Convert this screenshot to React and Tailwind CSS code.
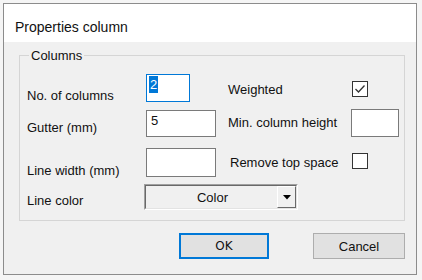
// Windows-style checkbox
function CheckBox({ checked }) {
  return (
    <div className="w-[16px] h-[16px] border border-[#333333] bg-white flex items-center justify-center">
      {checked && (
        <svg width="14" height="14" viewBox="0 0 14 14">
          <polyline points="2.5,7 5.5,10 11.5,3.5" fill="none" stroke="#333333" strokeWidth="1.3" />
        </svg>
      )}
    </div>
  )
}

// Plain text box
function TextBox({ className = '', focused = false, children }) {
  return (
    <div
      className={`bg-white border ${focused ? 'border-[#0078d7]' : 'border-[#7a7a7a]'} pl-[2px] pt-[1px] text-[13px] leading-[17px] ${className}`}
    >
      {children}
    </div>
  )
}

export default function App() {
  return (
    <div className="w-[422px] h-[280px] bg-[#f5f5f5] pl-[3px] pt-[3px] overflow-hidden text-[#111111] font-['Liberation_Sans',Arial,sans-serif]">
      {/* ── Dialog window ───────────────────────────── */}
      <div className="w-[414px] h-[272px] border border-[#8c8c8c] bg-[#f0f0f0] flex flex-col">

        {/* Title bar */}
        <div className="h-[38px] bg-white pl-[11px] pt-[11px] shrink-0">
          <span className="text-[14px] leading-[16px]">Properties column</span>
        </div>

        {/* Body */}
        <div className="flex-1 pl-[15px] pr-[11px] pt-[6px] flex flex-col">
          <fieldset className="h-[173px] border border-[#d5d5d5]">
            <legend className="ml-[9px] px-[2px] text-[13px] leading-[15px]">Columns</legend>

            <div className="pl-[7px] pt-[11px] text-[13px] leading-[15px]">
              {/* Row 1 */}
              <div className="grid grid-cols-[119px_82px_123px_1fr] items-start h-[36px]">
                <span className="mt-[14px]">No. of columns</span>
                <TextBox focused className="w-[44px] h-[28px]">
                  <span className="bg-[#0078d7] text-white inline-block px-[1px]">2</span>
                </TextBox>
                <span className="mt-[8px]">Weighted</span>
                <div className="mt-[7px] ml-[1px]">
                  <CheckBox checked />
                </div>
              </div>

              {/* Row 2 */}
              <div className="grid grid-cols-[119px_82px_123px_1fr] items-start h-[38px]">
                <span className="mt-[10px]">Gutter (mm)</span>
                <TextBox className="w-[70px] h-[27px]">
                  <span className="pl-[2px]">5</span>
                </TextBox>
                <span className="mt-[5px]">Min. column height</span>
                <TextBox className="w-[48px] h-[28px] -mt-[1px]" />
              </div>

              {/* Row 3 */}
              <div className="grid grid-cols-[119px_82px_123px_1fr] items-start h-[36px]">
                <span className="mt-[15px]">Line width (mm)</span>
                <TextBox className="w-[70px] h-[29px]" />
                <span className="mt-[7px] ml-[2px]">Remove top space</span>
                <div className="mt-[5px] ml-[1px]">
                  <CheckBox />
                </div>
              </div>

              {/* Row 4 */}
              <div className="flex items-start h-[26px]">
                <span className="w-[117px] mt-[9px]">Line color</span>
                <div className="w-[154px] h-[26px] border border-t-[#a0a0a0] border-l-[#a0a0a0] border-b-white border-r-white">
                  <div className="h-full border border-t-[#696969] border-l-[#696969] border-b-[#e3e3e3] border-r-[#e3e3e3] flex items-center">
                    <span className="flex-1 text-center pl-[2px]">Color</span>
                    <div className="w-[19px] h-[22px] border border-t-white border-l-white border-b-[#696969] border-r-[#696969] bg-[#f0f0f0] flex items-center justify-center">
                      <svg width="8" height="5" viewBox="0 0 8 5">
                        <polygon points="0,0 8,0 4,4.5" fill="#000" />
                      </svg>
                    </div>
                  </div>
                </div>
              </div>
            </div>
          </fieldset>

          {/* Buttons */}
          <div className="flex justify-end gap-[44px] mt-[12px] text-[13px]">
            <button className="w-[90px] h-[26px] bg-[#e1e1e1] border-2 border-[#0078d7] leading-[15px] font-['DejaVu_Sans',sans-serif] text-[12px]">
              OK
            </button>
            <button className="w-[92px] h-[26px] bg-[#e1e1e1] border border-[#adadad] leading-[15px]">
              Cancel
            </button>
          </div>
        </div>
      </div>
    </div>
  )
}
